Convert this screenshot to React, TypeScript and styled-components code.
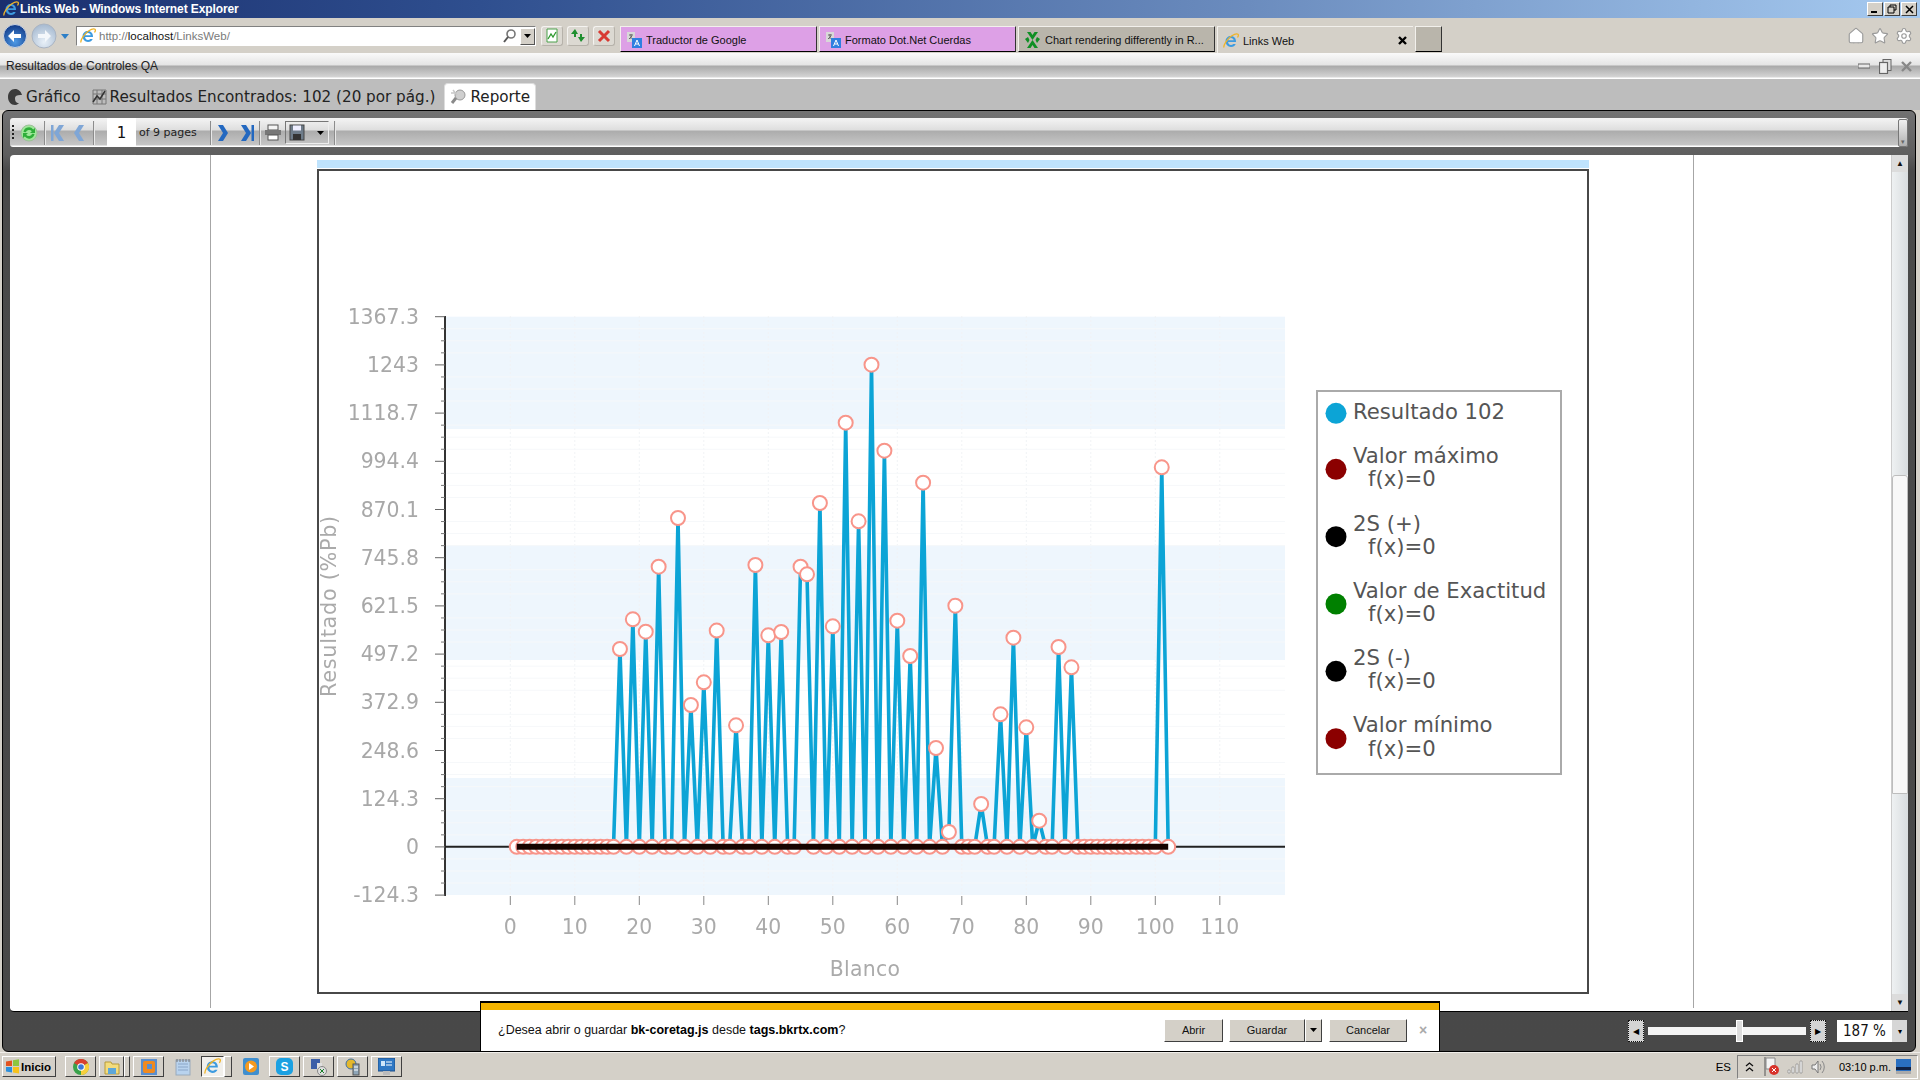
import React from 'react';
import styled, { createGlobalStyle } from 'styled-components';
import { House, Star, Settings } from 'lucide-react';

const Global = createGlobalStyle`
  html, body { margin: 0; padding: 0; background: #d4d0c8; overflow: hidden; }
  * { box-sizing: border-box; }
`;
const UI = `"Liberation Sans", Arial, sans-serif`;
const CHART = `"DejaVu Sans", Verdana, sans-serif`;

const Root = styled.div`
  position: relative; width: 1920px; height: 1080px; display: flex; flex-direction: column;
  overflow: hidden; background: #d4d0c8; font-family: ${UI}; font-size: 11px; color: #000;
`;
const TitleBar = styled.div`
  height: 18px; flex: none; display: flex; align-items: center; padding: 0 3px 0 3px; gap: 1px;
  background: linear-gradient(90deg, #1a2f6e 0%, #2f4f8f 25%, #6b8cbe 65%, #a6caf0 100%);
`;
const TitleText = styled.span`
  flex: 1; color: #fff; font: bold 12px ${UI}; letter-spacing: -0.1px;
`;
const WinButton = styled.div`
  width: 16px; height: 14px; background: #d4d0c8; display: flex; align-items: center; justify-content: center;
  border: 1px solid; border-color: #fff #404040 #404040 #fff; margin-right: 0; color: #000;
`;
const NavRow = styled.div`
  height: 35px; flex: none; display: flex; align-items: center; padding-left: 3px; background: #d4d0c8;
`;
const AddressBox = styled.div`
  width: 460px; height: 20px; margin-left: 4px; display: flex; align-items: center; background: #fff;
  border: 1px solid; border-color: #808080 #fff #fff #808080; padding: 1px 0 0 3px; font: 11.5px ${UI}; color: #7a7a7a;
`;
const AddressText = styled.span` flex: 1; margin-left: 3px; b { font-weight: normal; color: #111; } `;
const AddressDrop = styled.div`
  width: 15px; height: 17px; background: #d4d0c8; display: flex; align-items: center; justify-content: center;
  border: 1px solid; border-color: #fff #555 #555 #fff;
`;
const ToolGroup = styled.div` display: flex; gap: 4px; margin-left: 5px; `;
const ToolButton = styled.div`
  width: 22px; height: 20px; display: flex; align-items: center; justify-content: center; background: #dcd9d2;
  border: 1px solid #b6b2aa; border-top-color: #f4f3f0; border-left-color: #f4f3f0; border-radius: 3px;
`;
const Tabs = styled.div` display: flex; gap: 2px; margin-left: 5px; height: 27px; align-self: flex-end; `;
const BrowserTab = styled.div<{ $bg: string; $active?: boolean; $w: number }>`
  width: ${p => p.$w}px; height: ${p => (p.$active ? 27 : 26)}px; background: ${p => p.$bg}; display: flex; align-items: center;
  gap: 4px; padding: 1px 6px 0 5px; font: 11px ${UI}; color: #111;
  border-top: 1px solid #f2f0ec; border-left: 1px solid #f2f0ec;
  ${p => (p.$active ? '' : 'border-bottom: 1px solid #000; border-right: 1px solid #333;')}
`;
const TabLabel = styled.span` flex: 1; white-space: nowrap; overflow: hidden; `;
const NavIcons = styled.div`
  margin-left: auto; display: flex; gap: 6px; padding-right: 7px; color: #9a9a9a;
  svg { fill: #fff; }
`;
const PageTitleBar = styled.div`
  height: 26px; flex: none; display: flex; align-items: center; padding: 0 6px; font: 12px ${UI}; color: #222;
  background: linear-gradient(#fafafa 0, #e4e4e4 12px, #a9a9a9 13px, #d4d4d4 24px, #fff 25px);
`;
const PageTitle = styled.span` flex: 1; `;
const PageControls = styled.div` display: flex; align-items: center; gap: 9px; padding-right: 2px; `;
const AppTabs = styled.div`
  height: 31px; flex: none; display: flex; align-items: flex-end; background: #bdbdbd; padding-left: 8px;
`;
const AppTab = styled.div<{ $active?: boolean; $ml?: number }>`
  height: ${p => (p.$active ? 27 : 26)}px; display: flex; align-items: center; gap: 3px; margin-left: ${p => p.$ml ?? 0}px;
  font: 15.2px "DejaVu Sans", sans-serif; color: #222; white-space: nowrap;
  ${p => p.$active && 'background:#fff; padding: 0 5px; border-radius: 4px 4px 0 0; border: 1px solid #ddd; border-bottom: 0; margin-bottom:0;'}
`;
const Frame = styled.div`
  flex: none; height: 942px; width: 1914px; margin-left: 2px; display: flex; flex-direction: column; padding: 7px 7px 0;
  background: linear-gradient(#727272 0, #5e5e5e 44px, #4a4a4a 60px, #484848 100%);
  border: 1px solid #000; border-radius: 6px 6px 6px 6px;
`;
const Toolbar = styled.div`
  height: 29px; flex: none; display: flex; align-items: center; border-radius: 3px;
  background: linear-gradient(#f4f4f4 0, #dedede 12px, #acacac 13px, #c6c6c6 27px, #fff 28px);
  padding-left: 2px;
`;
const Grip = styled.div`
  width: 2px; height: 16px; margin-right: 6px;
  background: repeating-linear-gradient(#222 0 2px, transparent 2px 4px);
`;
const Sep = styled.div<{ $ml?: number; $mr?: number }>`
  width: 1px; height: 24px; background: #8c8c8c; margin-left: ${p => p.$ml ?? 0}px; margin-right: ${p => p.$mr ?? 0}px; box-shadow: 1px 0 0 #e8e8e8;
`;
const PageInput = styled.div`
  width: 29px; height: 29px; background: #fff; display: flex; align-items: center; justify-content: center;
  font: 15px "DejaVu Sans", sans-serif; color: #111;
`;
const PageCount = styled.span` font: 11px "DejaVu Sans", sans-serif; color: #222; margin-left: 3px; width: 71px; `;
const SaveBox = styled.div`
  width: 44px; height: 23px; display: flex; align-items: center; justify-content: space-between; padding: 0 4px 0 3px;
  border: 1px solid #777; border-right-color: #eee; border-bottom-color: #eee; margin-left: 3px; margin-right: 5px;
`;
const ToolbarEnd = styled.div`
  margin-left: auto; width: 10px; height: 28px; background: linear-gradient(#f0f0f0, #b0b0b0); border: 1px solid #777; border-radius: 2px;
  display: flex; align-items: flex-end; justify-content: center; font-size: 7px; color: #666;
`;
const Viewport = styled.div`
  height: 857px; margin-top: 8px; flex: none; display: flex; background: #fff;
  border: 1px solid #000; border-width: 0 0 1px 0; border-radius: 4px 0 0 4px;
`;
const Gutter = styled.div` width: 200px; flex: none; `;
const ReportPage = styled.div`
  width: 1484px; height: 853px; flex: none; border: 1px solid #a6a6a6; border-width: 0 1px; padding: 5px 0 0 106px;
`;
const BlueStrip = styled.div` width: 1272px; height: 8px; background: #bfe3fd; margin-bottom: 1px; `;
const ChartBox = styled.div`
  width: 1272px; height: 825px; border: 2px solid #484848; background: #fff;
  svg { display: block; filter: blur(0.45px); overflow: visible; }
`;
const PageRest = styled.div` flex: 1; `;
const Scroll = styled.div`
  width: 17px; flex: none; display: flex; flex-direction: column; background: #f2f4f5; border-left: 1px solid #ccc;
`;
const ScrollBtn = styled.div`
  height: 17px; flex: none; display: flex; align-items: center; justify-content: center; background: #dcdcdc;
  font-size: 8px; color: #111;
`;
const ScrollGap = styled.div<{ $h: number }>` height: ${p => p.$h}px; flex: none; background: linear-gradient(90deg, #eef1f2, #d8dcdf); `;
const ScrollThumb = styled.div`
  flex: 1; background: #f8f8f8; border: 1px solid #bdbdbd; border-radius: 3px 3px 0 0;
`;
const BottomBar = styled.div`
  flex: 1; display: flex; align-items: flex-start; justify-content: flex-end; padding-top: 8px;
`;
const ZoomBtn = styled.div`
  width: 16px; height: 22px; background: #d4d4d4; border: 1px dotted #111; display: flex; align-items: center; justify-content: center;
  font-size: 8px; color: #000; flex: none;
`;
const ZoomTrack = styled.div`
  width: 158px; height: 8px; margin: 7px 4px 0; background: #f4f4f4; display: flex; justify-content: flex-start; flex: none;
`;
const ZoomThumb = styled.div` width: 7px; height: 22px; background: #ddd; border: 1px solid #fff; margin: -7px 0 0 88px; `;
const ZoomValue = styled.div`
  width: 55px; height: 22px; margin-left: 11px; background: #fff; display: flex; align-items: center; padding-left: 6px;
  font: 15px "DejaVu Sans Condensed", "DejaVu Sans", sans-serif; color: #111;
`;
const ZoomDrop = styled.div`
  width: 15px; height: 22px; background: #d6d6d6; display: flex; align-items: center; justify-content: center; font-size: 8px; margin-right: 1px;
`;
const Taskbar = styled.div`
  flex: 1; display: flex; align-items: center; gap: 3px; padding-left: 2px; background: #d4d0c8; border-top: 1px solid #f0eeea;
`;
const StartBtn = styled.div`
  width: 54px; height: 21px; display: flex; align-items: center; gap: 1px; padding-left: 2px; margin-right: 6px; font: bold 11.5px ${UI};
  background: #d4d0c8; border: 1px solid; border-color: #fff #404040 #404040 #fff;
`;
const TaskBtn = styled.div<{ $w?: number; $flat?: boolean; $pressed?: boolean }>`
  width: ${p => p.$w ?? 31}px; height: 21px; display: flex; align-items: center; justify-content: center; flex: none;
  ${p => p.$flat ? '' : `border: 1px solid; border-color: ${p.$pressed ? '#404040 #fff #fff #404040' : '#fff #404040 #404040 #fff'};`}
  ${p => p.$pressed ? 'background:#f2f0ec;' : ''}
`;
const Stack = styled.div<{ $w: number }>`
  width: ${p => p.$w}px; height: 21px; margin-left: -3px; flex: none;
  border: 1px solid; border-color: #fff #404040 #404040 #fff;
`;
const Lang = styled.span` margin-left: auto; font: 11.5px ${UI}; margin-right: 3px; `;
const Tray = styled.div`
  width: 181px; height: 24px; display: flex; align-items: center; border: 1px solid; border-color: #808080 #fff #fff #808080;
  padding-left: 7px; margin-right: 2px; font: 11px ${UI};
`;
const Clock = styled.span` margin-left: 12px; margin-right: 5px; white-space: nowrap; `;
const TrayIcons = styled.div` display: flex; align-items: center; gap: 8px; margin-left: 10px; `;
const DownloadBar = styled.div`
  position: absolute; left: 480px; top: 1001px; width: 960px; height: 51px; background: #fff; border: 1px solid #000;
  border-top-width: 2px; display: flex; align-items: center; padding: 6px 0 0 17px; font: 12.5px ${UI}; color: #111;
  &::before { content: ''; position: absolute; left: 0; right: 0; top: 0; height: 7px; background: #f4b400; }
`;
const DownloadText = styled.span` flex: 1; b { font-weight: bold; color: #000; } `;
const BevelBtn = styled.div<{ $w: number; $ml?: number }>`
  width: ${p => p.$w}px; height: 23px; margin-left: ${p => p.$ml ?? 0}px; display: flex; align-items: center; justify-content: center;
  background: #d4d0c8; font: 11px ${UI}; border: 1px solid; border-color: #fff #404040 #404040 #fff; color: #111;
`;
const CloseX = styled.span` color: #aaa; font: bold 14px ${UI}; width: 32px; text-align: center; margin-left: 0; `;

/* ------- icons ------- */
const IeLogo = ({ s = 16 }: { s?: number }) => (
  <svg width={s} height={s} viewBox="0 0 16 16" style={{ flex: 'none' }}>
    <path d="M3 9h10c.3-3.4-2-6-5-6S2.600 5 2.600 8.300 5 14 8 14c2.300 0 4-1.200 4.700-3h-2.500c-.5.700-1.200 1-2.200 1-1.500 0-2.700-.9-2.900-3zM5.200 7.300C5.400 6 6.500 5 8 5s2.600 1 2.700 2.300z" fill="#3d9be0" />
    <path d="M1 14.500C.2 12.500 4 6 8.500 3c3-2 5.500-2.600 6.500-1.800.7.600.3 2-.5 3.300" fill="none" stroke="#f0b428" strokeWidth="1.300" />
  </svg>
);
const BackForward = () => (
  <svg width={69} height={30} viewBox="0 0 69 30" style={{ flex: 'none' }}>
    <defs>
      <radialGradient id="backG" cx="50%" cy="75%" r="70%"><stop offset="0" stopColor="#4f9be6" /><stop offset="1" stopColor="#153f8c" /></radialGradient>
      <radialGradient id="fwdG" cx="50%" cy="75%" r="70%"><stop offset="0" stopColor="#e8f0f8" /><stop offset="1" stopColor="#a9bcd2" /></radialGradient>
    </defs>
    <circle cx="12" cy="15" r="11.500" fill="url(#backG)" stroke="#cdd5e2" strokeWidth="1" />
    <path d="M5 15l6-6v4h7v4h-7v4z" fill="#fff" />
    <circle cx="41" cy="15" r="12" fill="url(#fwdG)" stroke="#aab4c2" />
    <path d="M48 15l-6-6v4h-7v4h7v4z" fill="#f4f7fb" />
    <path d="M58 13h8l-4 5z" fill="#2d7fc7" />
  </svg>
);
const Search = () => (
  <svg width={15} height={16} viewBox="0 0 15 16" style={{ flex: 'none', marginRight: 3 }}>
    <circle cx="9" cy="6" r="4" fill="#fff" stroke="#777" strokeWidth="1.600" />
    <path d="M6 9l-4 5" stroke="#555" strokeWidth="2" />
  </svg>
);
const DropTri = ({ c = '#000' }: { c?: string }) => (
  <svg width={7} height={4} viewBox="0 0 7 4"><path d="M0 0h7L3.500 4z" fill={c} /></svg>
);
const Compat = () => (
  <svg width={14} height={15} viewBox="0 0 14 15">
    <path d="M2 1h10v13H2z" fill="#fff" stroke="#4aa04a" />
    <path d="M3 11l3-5 2 3 3-5" fill="none" stroke="#2f9a2f" strokeWidth="1.300" />
  </svg>
);
const Reload = () => (
  <svg width={16} height={15} viewBox="0 0 16 15">
    <path d="M1 6l4-5 3 5H6v3H4V6z" fill="#1f8f2f" />
    <path d="M15 9l-4 5-3-5h2V6h2v3z" fill="#1f8f2f" />
  </svg>
);
const StopX = () => (
  <svg width={14} height={14} viewBox="0 0 14 14"><path d="M2 2l10 10M12 2L2 12" stroke="#d83a32" strokeWidth="3" /></svg>
);
const TranslateIcon = () => (
  <svg width={16} height={16} viewBox="0 0 16 16" style={{ flex: 'none' }}>
    <rect x="1" y="0" width="8" height="10" fill="#d8d8d8" />
    <path d="M3 3h4M5 2v5M3 7l3-3" stroke="#666" fill="none" />
    <rect x="6" y="6" width="10" height="10" fill="#2f7fe0" />
    <path d="M8.500 14l2.500-6 2.500 6M9.500 12h3" stroke="#fff" fill="none" />
  </svg>
);
const StackIcon = () => (
  <svg width={17} height={18} viewBox="0 0 17 18" style={{ flex: 'none' }}>
    <path d="M8.500 9L3 1h3.500l2 3 2-3H14zM8.500 9L3 17h3.500l2-3 2 3H14zM1 8l3-2 1.500 3L4 12zM16 8l-3-2-1.500 3 1.500 3z" fill="#0f8f24" />
  </svg>
);
const Sphere = () => (
  <svg width={15} height={18} viewBox="0 0 15 18" style={{ flex: 'none' }}>
    <path d="M7 1C3 1 0 4.500 0 9s3 8 7 8c2.500 0 4-2 4-2-3 0-4-2-4-5 0-2.500 3-3.500 7-3C13 3.500 10.500 1 7 1z" fill="#3c3c3c" />
  </svg>
);
const GridIcon = () => (
  <svg width={15} height={16} viewBox="0 0 15 16" style={{ flex: 'none' }}>
    <path d="M1 1h13v14H1zM1 5h13M1 10h13M5 1v14M10 1v14" fill="none" stroke="#777" />
    <path d="M1 13l4-6 3 3 5-8" fill="none" stroke="#333" strokeWidth="1.500" />
  </svg>
);
const Magnify = () => (
  <svg width={17} height={16} viewBox="0 0 17 16" style={{ flex: 'none' }}>
    <circle cx="10" cy="6" r="5" fill="#cfcfcf" stroke="#999" />
    <path d="M6 9l-4 5" stroke="#8a8a8a" strokeWidth="3" />
    <path d="M1 4h5M3 1l4 5" stroke="#c8c8c8" strokeWidth="1.500" />
  </svg>
);
const Refresh = () => (
  <svg width={18} height={20} viewBox="0 0 18 20" style={{ flex: 'none' }}>
    <circle cx="9" cy="10" r="8" fill="#9fe69a" stroke="#9cc098" />
    <path d="M3.500 9a5.500 5.500 0 0 1 9.700-2.600L15 5v5h-5l1.800-1.800a3.500 3.500 0 0 0-6 1zM14.500 11a5.500 5.500 0 0 1-9.700 2.600L3 15v-5h5l-1.800 1.800a3.500 3.500 0 0 0 6-1z" fill="#2fae3a" />
  </svg>
);
const PageArrow = ({ dir, bar, c, ml }: { dir: 'l' | 'r'; bar?: boolean; c: string; ml: number }) => (
  <svg width={16} height={18} viewBox="0 0 16 18" style={{ marginLeft: ml, flex: 'none' }}>
    <g transform={dir === 'l' ? undefined : 'translate(16 0) scale(-1 1)'}>
      <path d={bar ? 'M8 1h5L8 9l5 8H8L3 9z' : 'M10 1h5l-5 8 5 8h-5L5 9z'} fill={c} />
      {bar && <rect x="0" y="1" width="2.500" height="16" fill={c} />}
    </g>
  </svg>
);
const PrintIcon = () => (
  <svg width={18} height={17} viewBox="0 0 18 17" style={{ flex: 'none' }}>
    <rect x="4" y="1" width="10" height="5" fill="#f4f4f4" stroke="#555" />
    <rect x="1" y="6" width="16" height="5" fill="#777" />
    <rect x="4" y="11" width="10" height="5" fill="#fff" stroke="#555" />
  </svg>
);
const SaveIcon = () => (
  <svg width={16} height={17} viewBox="0 0 16 17" style={{ flex: 'none' }}>
    <rect x="1" y="1" width="14" height="15" fill="#6e7c8a" stroke="#444" />
    <rect x="4" y="1.500" width="8" height="5" fill="#eef" />
    <rect x="4" y="10" width="8" height="6" fill="#333" />
  </svg>
);
const WinLogo = () => (
  <svg width={15} height={15} viewBox="0 0 15 15" style={{ flex: 'none' }}>
    <path d="M1 2.500l6-1v5.500H1z" fill="#e2531f" /><path d="M8 1.300l6-1v6.700H8z" fill="#8cc63f" />
    <path d="M1 8h6v5.500l-6-1z" fill="#2b8fdc" /><path d="M8 8h6v6.500l-6-1z" fill="#f6c21a" />
  </svg>
);
const Chrome = () => (
  <svg width={16} height={16} viewBox="0 0 16 16">
    <circle cx="8" cy="8" r="8" fill="#3aa24a" />
    <path d="M8 8L1 4a8 8 0 0 1 14 0z" fill="#d8402f" />
    <path d="M8 8l7-4a8 8 0 0 1-7 12z" fill="#f7cf3c" />
    <circle cx="8" cy="8" r="3.800" fill="#fff" /><circle cx="8" cy="8" r="2.800" fill="#3c78d8" />
  </svg>
);
const FolderIcon = () => (
  <svg width={16} height={16} viewBox="0 0 16 16">
    <path d="M1 3h6l1 2h7v10H1z" fill="#f3dc7c" stroke="#b79a3a" />
    <rect x="4" y="9" width="8" height="6" fill="#5fa7d8" />
  </svg>
);
const VmIcon = () => (
  <svg width={16} height={16} viewBox="0 0 16 16">
    <rect x="0" y="0" width="16" height="16" fill="#5a8fd0" /><rect x="2" y="2" width="12" height="12" rx="2" fill="#f08a20" />
    <rect x="6" y="5" width="5" height="5" fill="#5a8fd0" />
  </svg>
);
const NotepadIcon = () => (
  <svg width={16} height={18} viewBox="0 0 16 18">
    <rect x="1" y="2" width="14" height="15" fill="#b9d3ee" stroke="#9ab" />
    <path d="M3 6h10M3 9h10M3 12h10" stroke="#8aa6c8" /><path d="M2 1v3M5 1v3M8 1v3M11 1v3M14 1v3" stroke="#777" />
  </svg>
);
const WmpIcon = () => (
  <svg width={16} height={17} viewBox="0 0 16 17">
    <rect x="0" y="0" width="16" height="17" rx="2" fill="#3f8fcf" /><circle cx="8" cy="8.500" r="6" fill="#f49a20" />
    <path d="M6 5l5 3.500L6 12z" fill="#fff" />
  </svg>
);
const SkypeIcon = () => (
  <svg width={17} height={17} viewBox="0 0 17 17">
    <rect x="0" y="0" width="17" height="17" rx="5" fill="#1ba1e2" />
    <text x="8.500" y="13" textAnchor="middle" fontSize="12" fontWeight="bold" fontFamily="Liberation Sans" fill="#fff">S</text>
  </svg>
);
const NetApp = () => (
  <svg width={16} height={18} viewBox="0 0 16 18">
    <rect x="0" y="1" width="9" height="10" fill="#3b5ea8" /><rect x="6" y="5" width="5" height="6" fill="#e0e0e0" />
    <circle cx="11" cy="13" r="4.500" fill="#ddd" stroke="#888" /><path d="M9 11l4 4M13 11l-4 4" stroke="#1a7f2a" />
  </svg>
);
const GlobeApp = () => (
  <svg width={16} height={18} viewBox="0 0 16 18">
    <circle cx="6" cy="6" r="5" fill="#e4b82c" stroke="#3a6ea8" /><rect x="8" y="6" width="6" height="11" fill="#8fa6b8" stroke="#555" />
    <path d="M9 9h4M9 12h4" stroke="#fff" />
  </svg>
);
const MonitorApp = () => (
  <svg width={17} height={18} viewBox="0 0 17 18">
    <rect x="0" y="0" width="17" height="13" fill="#2f78c4" stroke="#1c4f8a" /><rect x="3" y="3" width="4" height="5" fill="#cfe6fa" />
    <path d="M8 4h6M8 7h6" stroke="#fff" /><rect x="5" y="13" width="7" height="4" fill="#bbb" />
  </svg>
);
const SliderFlag = () => (
  <svg width={15} height={19} viewBox="0 0 15 19">
    <path d="M1 0v19" stroke="#555" /><path d="M2 1h9v11H2z" fill="#f4f4f4" stroke="#888" />
    <circle cx="10" cy="13" r="5" fill="#d8322a" /><path d="M8 11l4 4M12 11l-4 4" stroke="#fff" />
  </svg>
);
const Signal = () => (
  <svg width={16} height={14} viewBox="0 0 16 14"><path d="M1 13h2v-3H1zM5 13h2V7H5zM9 13h2V4H9zM13 13h2V1h-2z" fill="#fff" stroke="#888" strokeWidth=".7" /></svg>
);
const Speaker = () => (
  <svg width={16} height={18} viewBox="0 0 16 18"><path d="M1 7h3l3-4v12l-3-4H1z" fill="#eee" stroke="#777" /><path d="M9 6a5 5 0 0 1 0 6M11 3a9 9 0 0 1 0 12" fill="none" stroke="#888" /></svg>
);
const TrayMon = () => (
  <svg width={15} height={15} viewBox="0 0 15 15"><rect width="15" height="13" fill="#2a6fc0" /><rect y="8" width="15" height="3" fill="#124" /><rect y="12" width="15" height="3" fill="#aaa" /></svg>
);
const Caret = () => (
  <svg width={9} height={12} viewBox="0 0 9 12"><path d="M1 5l3.500-3L8 5M1 10l3.500-3L8 10" fill="none" stroke="#111" strokeWidth="1.300" /></svg>
);
const MinGlyph = () => <svg width={12} height={6} viewBox="0 0 12 6"><rect x="0" y="1" width="12" height="4" fill="#e8e8e8" stroke="#666" /></svg>;
const DocGlyph = () => <svg width={13} height={15} viewBox="0 0 13 15"><rect x="4" y="0.500" width="8" height="11" fill="#ddd" stroke="#666" /><rect x="0.500" y="3.500" width="8" height="11" fill="#eee" stroke="#666" strokeWidth="1.200" /></svg>;
const CloseGlyph = () => <svg width={11} height={11} viewBox="0 0 11 11"><path d="M1 1l9 9M10 1l-9 9" stroke="#888" strokeWidth="2.400" /></svg>;

/* ------- chart ------- */
const PEAKS: Record<number, number> = {
  17: 649, 19: 619.3, 21: 631.7, 23: 566.7, 26: 518, 28: 705, 30: 682.3, 32: 630.6, 35: 725.3, 38: 565, 40: 635.3,
  42: 632, 45: 566.7, 46: 574.3, 48: 503, 50: 626.3, 52: 422.7, 54: 521.3, 56: 364.7, 58: 450.7, 60: 620.7,
  62: 656, 64: 482.7, 66: 748, 68: 832, 69: 605.7, 73: 804, 76: 714.3, 78: 637.7, 80: 727.3, 82: 820.7,
  85: 647, 87: 667.3, 101: 467.3,
};
const ZERO = 846.8;
const px = (i: number) => 510.3 + 6.45 * i;
const POINTS = Array.from({ length: 102 }, (_, k) => ({ x: px(k + 1), y: PEAKS[k + 1] ?? ZERO }));
const Y_LABELS = ['1367.3', '1243', '1118.7', '994.4', '870.1', '745.8', '621.5', '497.2', '372.9', '248.6', '124.3', '0', '-124.3'];
const yPos = (i: number) => 316.7 + i * 48.2;
const BANDS = [[316.7, 429], [545, 660], [778, 895]];
const LEGEND = [
  { c: '#0ca4d6', cy: 413.3, lines: [['Resultado 102', 419]] },
  { c: '#8b0000', cy: 469.3, lines: [['Valor máximo', 463], ['f(x)=0', 486]] },
  { c: '#000', cy: 536.7, lines: [['2S (+)', 530.7], ['f(x)=0', 553.5]] },
  { c: '#008000', cy: 604, lines: [['Valor de Exactitud', 597.5], ['f(x)=0', 620.5]] },
  { c: '#000', cy: 671.3, lines: [['2S (-)', 665], ['f(x)=0', 688]] },
  { c: '#8b0000', cy: 738.7, lines: [['Valor mínimo', 732], ['f(x)=0', 755.5]] },
] as { c: string; cy: number; lines: [string, number][] }[];

const Chart = () => {
  const xTicks = Array.from({ length: 12 }, (_, i) => i * 10);
  const minors: number[] = [];
  for (let i = 0; i < 12; i++) for (let j = 1; j < 4; j++) minors.push(yPos(i) + j * 12.05);
  return (
    <svg width={1268} height={821} viewBox="319 171 1268 821" fontFamily={CHART}>
      {BANDS.map(([a, b]) => <rect key={a} x={446} y={a} width={839} height={b - a} fill="#eef6fd" />)}
      {xTicks.map(t => <line key={t} x1={px(t)} x2={px(t)} y1={316} y2={895} stroke="#f1f3f6" strokeDasharray="2 2" />)}
      {minors.map(y => <line key={y} x1={446} x2={1285} y1={y} y2={y} stroke="#f6f8fa" />)}
      <line x1={445} x2={445} y1={316} y2={896} stroke="#333" strokeWidth={2} />
      {Y_LABELS.map((l, i) => (
        <g key={l}>
          <line x1={435} x2={445} y1={yPos(i)} y2={yPos(i)} stroke="#666" />
          <text x={419} y={yPos(i) + 7} textAnchor="end" fontSize={20.4} fill="#a8a8a8">{l}</text>
        </g>
      ))}
      {minors.map(y => <line key={'m' + y} x1={441} x2={445} y1={y} y2={y} stroke="#777" />)}
      {xTicks.map(t => (
        <g key={'x' + t}>
          <line x1={px(t)} x2={px(t)} y1={896} y2={905} stroke="#888" />
          <text x={px(t)} y={934} textAnchor="middle" fontSize={20.4} fill="#aaa">{t}</text>
        </g>
      ))}
      <text x={865} y={976} textAnchor="middle" fontSize={20.4} fill="#aaa" letterSpacing={0.3}>Blanco</text>
      <text transform="translate(336 606) rotate(-90)" textAnchor="middle" fontSize={20.8} letterSpacing={0.7} fill="#aaa">Resultado (%Pb)</text>
      <line x1={445} x2={1285} y1={ZERO} y2={ZERO} stroke="#222" strokeWidth={2} />
      <polyline points={POINTS.map(p => `${p.x},${p.y}`).join(' ')} fill="none" stroke="#0ca4d6" strokeWidth={3.6} strokeLinejoin="round" />
      {POINTS.map(p => <circle key={p.x} cx={p.x} cy={p.y} r={7} fill="#fff" stroke="#f8958a" strokeWidth={2} />)}
      <line x1={px(1)} x2={px(102)} y1={ZERO} y2={ZERO} stroke="#160400" strokeWidth={6} />
      <rect x={1317} y={391} width={244} height={383} fill="#fff" stroke="#aaa" strokeWidth={2} />
      {LEGEND.map(row => (
        <g key={row.cy}>
          <circle cx={1336} cy={row.cy} r={10.5} fill={row.c} />
          {row.lines.map(([t, y]) => (
            <text key={t} x={t === 'f(x)=0' ? 1368 : 1353} y={y} fontSize={21.2} fill="#555">{t}</text>
          ))}
        </g>
      ))}
    </svg>
  );
};

export default function App() {
  return (
    <Root>
      <Global />
      <TitleBar>
        <IeLogo />
        <TitleText>Links Web - Windows Internet Explorer</TitleText>
        <WinButton><svg width={8} height={8} viewBox="0 0 8 8"><rect y="6" width="6" height="2" /></svg></WinButton>
        <WinButton><svg width={10} height={10} viewBox="0 0 10 10"><path d="M3 3V1h6v5H7M1 3h6v6H1z" fill="none" stroke="#000" /></svg></WinButton>
        <WinButton><svg width={9} height={9} viewBox="0 0 9 9"><path d="M1 1l7 7M8 1L1 8" stroke="#000" strokeWidth="1.500" /></svg></WinButton>
      </TitleBar>
      <NavRow>
        <BackForward />
        <AddressBox>
          <IeLogo />
          <AddressText>http://<b>localhost</b>/LinksWeb/</AddressText>
          <Search />
          <AddressDrop><DropTri /></AddressDrop>
        </AddressBox>
        <ToolGroup>
          <ToolButton><Compat /></ToolButton>
          <ToolButton><Reload /></ToolButton>
          <ToolButton><StopX /></ToolButton>
        </ToolGroup>
        <Tabs>
          <BrowserTab $bg="#dda0e6" $w={197}><TranslateIcon /><TabLabel>Traductor de Google</TabLabel></BrowserTab>
          <BrowserTab $bg="#dda0e6" $w={197}><TranslateIcon /><TabLabel>Formato Dot.Net Cuerdas</TabLabel></BrowserTab>
          <BrowserTab $bg="#b9b5ab" $w={197}><StackIcon /><TabLabel>Chart rendering differently in R...</TabLabel></BrowserTab>
          <BrowserTab $bg="#d4d0c8" $w={196} $active><IeLogo /><TabLabel>Links Web</TabLabel><svg width={9} height={9} viewBox="0 0 9 9"><path d="M1 1l7 7M8 1L1 8" stroke="#000" strokeWidth="2.400" /></svg></BrowserTab>
          <BrowserTab $bg="#b9b5ab" $w={27} />
        </Tabs>
        <NavIcons>
          <House size={18} strokeWidth={1.5} />
          <Star size={18} strokeWidth={1.5} />
          <Settings size={18} strokeWidth={1.5} />
        </NavIcons>
      </NavRow>
      <PageTitleBar>
        <PageTitle>Resultados de Controles QA</PageTitle>
        <PageControls><MinGlyph /><DocGlyph /><CloseGlyph /></PageControls>
      </PageTitleBar>
      <AppTabs>
        <AppTab><Sphere />Gráfico</AppTab>
        <AppTab $ml={11}><GridIcon />Resultados Encontrados: 102 (20 por pág.)</AppTab>
        <AppTab $active $ml={9}><Magnify />Reporte</AppTab>
      </AppTabs>
      <Frame>
        <Toolbar>
          <Grip />
          <Refresh />
          <Sep $ml={6} />
          <PageArrow dir="l" bar c="#7fa6d6" ml={6} />
          <PageArrow dir="l" c="#7fa6d6" ml={2} />
          <Sep $ml={8} $mr={13} />
          <PageInput>1</PageInput>
          <PageCount>of 9 pages</PageCount>
          <Sep />
          <PageArrow dir="r" c="#2368c0" ml={6} />
          <PageArrow dir="r" bar c="#2368c0" ml={5} />
          <Sep $ml={5} $mr={4} />
          <PrintIcon />
          <SaveBox><SaveIcon /><DropTri /></SaveBox>
          <Sep />
          <ToolbarEnd>▾</ToolbarEnd>
        </Toolbar>
        <Viewport>
          <Gutter />
          <ReportPage>
            <BlueStrip />
            <ChartBox><Chart /></ChartBox>
          </ReportPage>
          <PageRest />
          <Scroll>
            <ScrollBtn>▲</ScrollBtn>
            <ScrollGap $h={303} />
            <ScrollThumb />
            <ScrollGap $h={200} />
            <ScrollBtn>▼</ScrollBtn>
          </Scroll>
        </Viewport>
        <BottomBar>
          <ZoomBtn>◀</ZoomBtn>
          <ZoomTrack><ZoomThumb /></ZoomTrack>
          <ZoomBtn>▶</ZoomBtn>
          <ZoomValue>187 %</ZoomValue>
          <ZoomDrop>▾</ZoomDrop>
        </BottomBar>
      </Frame>
      <Taskbar>
        <StartBtn><WinLogo />Inicio</StartBtn>
        <TaskBtn><Chrome /></TaskBtn>
        <TaskBtn $w={25}><FolderIcon /></TaskBtn>
        <Stack $w={6} />
        <TaskBtn><VmIcon /></TaskBtn>
        <TaskBtn $flat><NotepadIcon /></TaskBtn>
        <TaskBtn $w={23} $pressed><IeLogo s={17} /></TaskBtn>
        <Stack $w={8} />
        <TaskBtn $flat><WmpIcon /></TaskBtn>
        <TaskBtn><SkypeIcon /></TaskBtn>
        <TaskBtn><NetApp /></TaskBtn>
        <TaskBtn><GlobeApp /></TaskBtn>
        <TaskBtn><MonitorApp /></TaskBtn>
        <Lang>ES</Lang>
        <Tray>
          <Caret />
          <TrayIcons><SliderFlag /><Signal /><Speaker /></TrayIcons>
          <Clock>03:10 p.m.</Clock>
          <TrayMon />
        </Tray>
      </Taskbar>
      <DownloadBar>
        <DownloadText>¿Desea abrir o guardar <b>bk-coretag.js</b> desde <b>tags.bkrtx.com</b>?</DownloadText>
        <BevelBtn $w={59}>Abrir</BevelBtn>
        <BevelBtn $w={76} $ml={6}>Guardar</BevelBtn>
        <BevelBtn $w={17}><DropTri /></BevelBtn>
        <BevelBtn $w={78} $ml={7}>Cancelar</BevelBtn>
        <CloseX>×</CloseX>
      </DownloadBar>
    </Root>
  );
}
